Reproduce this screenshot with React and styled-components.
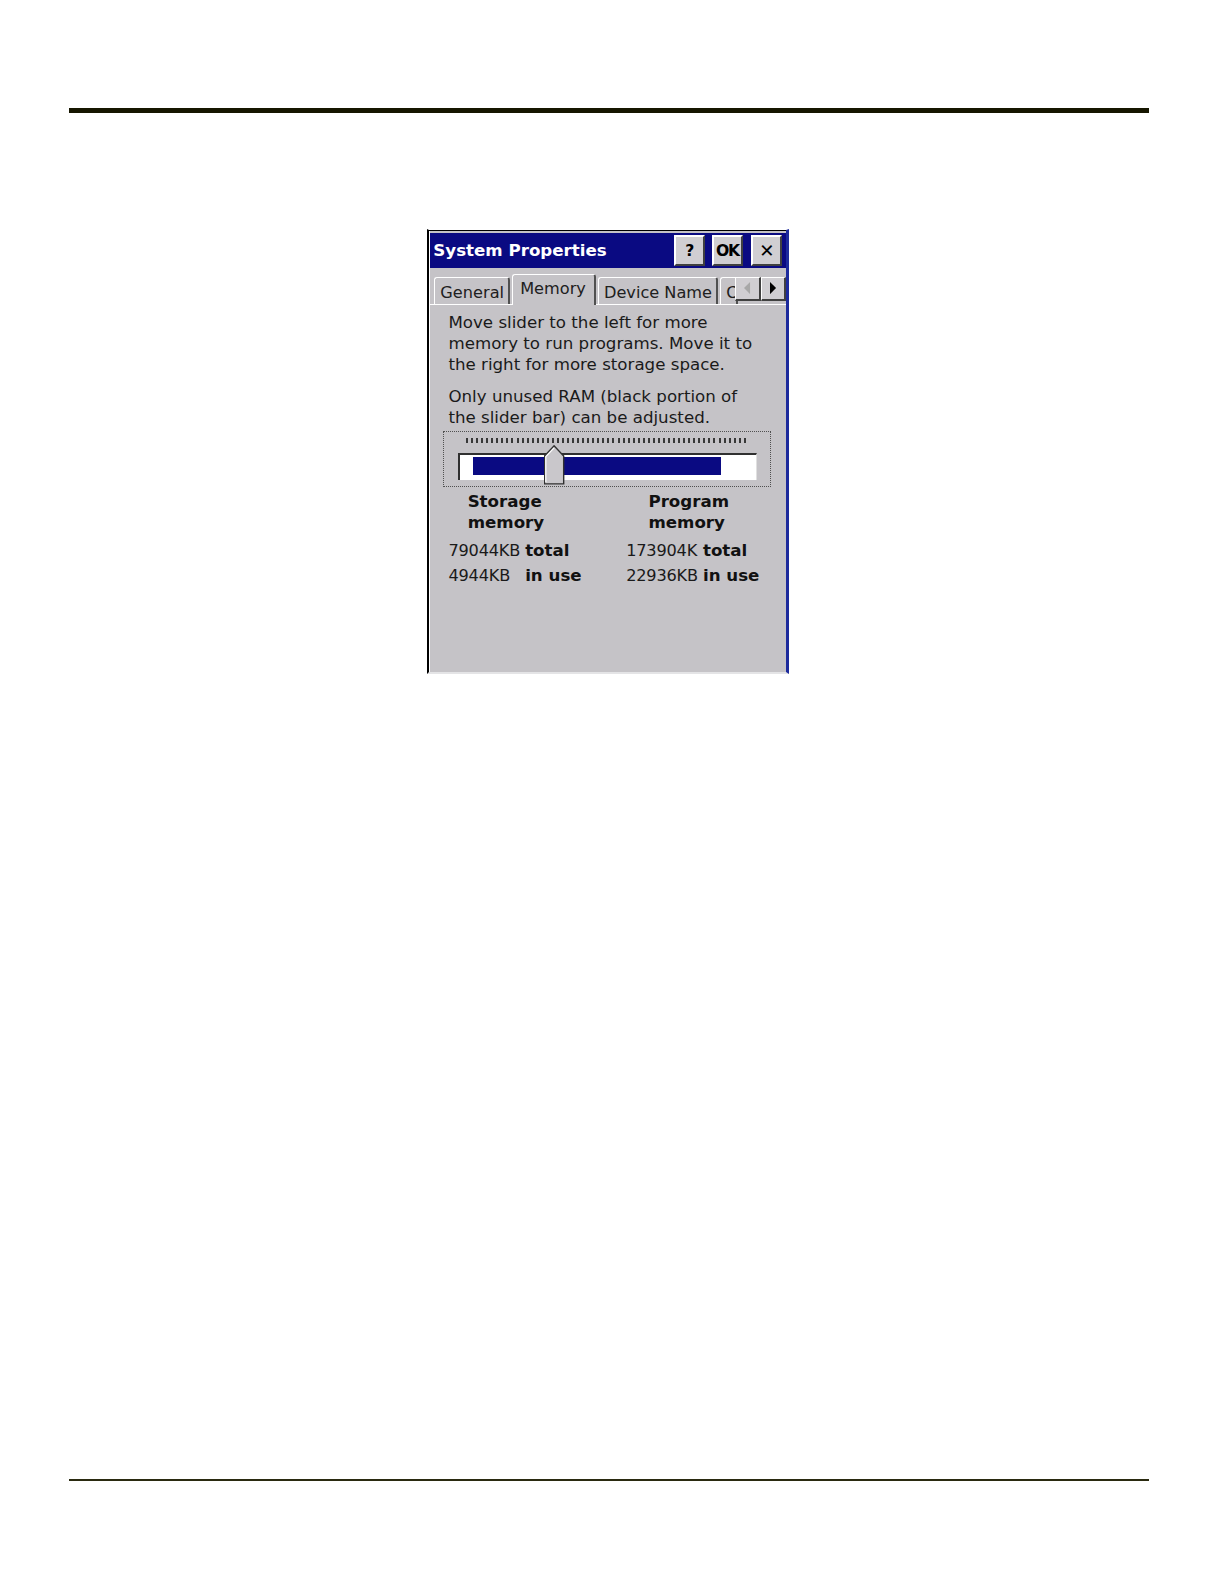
import styled, { createGlobalStyle } from "styled-components";

const GlobalStyle = createGlobalStyle`
  html, body {
    margin: 0;
    padding: 0;
    background: #ffffff;
  }
`;

const BLUE = "#0a0a82";
const GRAY = "#c5c3c7";
const FONT = `"DejaVu Sans", Verdana, sans-serif`;

export default function App() {
  return (
    <Page>
      <GlobalStyle />
      <TopRule />
      <Window>
        <TitleBar>
          <Title>System Properties</Title>
          <TitleButtons>
            <TitleButton>?</TitleButton>
            <TitleButton>OK</TitleButton>
            <TitleButton $thin>✕</TitleButton>
          </TitleButtons>
        </TitleBar>

        <TabRow>
          <Tab>General</Tab>
          <Tab $active>Memory</Tab>
          <Tab>Device Name</Tab>
          <Tab $clip>C</Tab>
          <ScrollArrows>
            <ArrowButton>
              <svg width="8" height="12" viewBox="0 0 8 12">
                <polygon points="7,0 1,6 7,12" fill="#a8a8a8" />
              </svg>
            </ArrowButton>
            <ArrowButton>
              <svg width="8" height="12" viewBox="0 0 8 12">
                <polygon points="1,0 7,6 1,12" fill="#000" />
              </svg>
            </ArrowButton>
          </ScrollArrows>
        </TabRow>

        <Panel>
          <Para>
            Move slider to the left for more
            <br />
            memory to run programs. Move it to
            <br />
            the right for more storage space.
          </Para>
          <Para>
            Only unused RAM (black portion of
            <br />
            the slider bar) can be adjusted.
          </Para>

          <SliderBox>
            <Ticks />
            <Track>
              <UsedBar />
              <Thumb>
                <svg width="20" height="39" viewBox="0 0 20 39">
                  <polygon
                    points="0.5,11 10,0.8 19.5,11 19.5,38.5 0.5,38.5"
                    fill="#c9c7cb"
                    stroke="#303030"
                    strokeWidth="1.4"
                  />
                  <polyline
                    points="1.8,37 1.8,11.5 10,2.8"
                    fill="none"
                    stroke="#ffffff"
                    strokeWidth="1.2"
                  />
                </svg>
              </Thumb>
            </Track>
          </SliderBox>

          <Columns>
            <Column>
              <Heading $indent={19}>
                Storage
                <br />
                memory
              </Heading>
              <Stats>
                <span>79044KB</span>
                <b>total</b>
                <span>4944KB</span>
                <b>in use</b>
              </Stats>
            </Column>
            <Column>
              <Heading $indent={22}>
                Program
                <br />
                memory
              </Heading>
              <Stats>
                <span>173904K</span>
                <b>total</b>
                <span>22936KB</span>
                <b>in use</b>
              </Stats>
            </Column>
          </Columns>
        </Panel>
      </Window>
      <BottomRule />
    </Page>
  );
}

const Page = styled.div`
  zoom: 1.0101;
  padding-top: 107px;
  padding-bottom: 60px;
  font-family: ${FONT};
`;

const TopRule = styled.div`
  margin-left: 68px;
  width: 1070px;
  height: 5px;
  background: #161600;
`;

const BottomRule = styled.div`
  margin-top: 797px;
  margin-left: 68px;
  width: 1070px;
  height: 2px;
  background: #2a2a10;
`;

const Window = styled.div`
  margin-top: 115px;
  margin-left: 423px;
  width: 358px;
  height: 440px;
  box-sizing: border-box;
  border-top: 1px solid #ffffff;
  border-left: 2px solid #000000;
  border-right: 3px solid #1c2a9c;
  border-bottom: 2px solid #e4e4e6;
  background: ${GRAY};
  box-shadow: inset 0 1px 0 #000, inset 1px 0 0 #ffffff;
  display: flex;
  flex-direction: column;
  padding: 3px 0 0 1px;
`;

const TitleBar = styled.div`
  height: 34px;
  background: ${BLUE};
  display: flex;
  align-items: center;
  justify-content: space-between;
  padding: 0 4px 0 3px;
`;

const Title = styled.div`
  color: #ffffff;
  font-weight: bold;
  font-size: 16.5px;
`;

const TitleButtons = styled.div`
  display: flex;
  gap: 7px;
`;

const TitleButton = styled.div`
  width: 31px;
  height: 30px;
  box-sizing: border-box;
  background: #d0ced2;
  border-top: 2px solid #ffffff;
  border-left: 2px solid #ffffff;
  border-right: 2px solid #404040;
  border-bottom: 2px solid #404040;
  display: flex;
  align-items: center;
  justify-content: center;
  font-weight: ${(p) => (p.$thin ? "normal" : "bold")};
  font-size: ${(p) => (p.$thin ? "18px" : "15.5px")};
  color: #000;
  letter-spacing: -1.5px;
  padding-right: ${(p) => (p.$thin ? "0" : "1px")};
`;

const TabRow = styled.div`
  display: flex;
  align-items: flex-end;
  height: 36px;
  padding-left: 4px;
  border-bottom: 1px solid #ffffff;
  position: relative;
`;

const Tab = styled.div`
  height: ${(p) => (p.$active ? "31px" : "27px")};
  box-sizing: border-box;
  padding: ${(p) => (p.$active ? "4px 8px 0 7px" : "5px 4px 0 5px")};
  margin-bottom: ${(p) => (p.$active ? "-1px" : "0")};
  margin-right: 2px;
  background: ${GRAY};
  border-top: 1px solid #ffffff;
  border-left: 1px solid #ffffff;
  border-right: 2px solid #505050;
  border-top-left-radius: 3px;
  border-top-right-radius: 3px;
  font-size: 16px;
  color: #202020;
  white-space: nowrap;
  overflow: hidden;
  width: ${(p) => (p.$clip ? "18px" : "auto")};
  z-index: ${(p) => (p.$active ? 1 : 0)};
`;

const ScrollArrows = styled.div`
  position: absolute;
  right: 0;
  top: 9px;
  display: flex;
  z-index: 2;
`;

const ArrowButton = styled.div`
  width: 25px;
  height: 24px;
  box-sizing: border-box;
  background: #d0ced2;
  border-top: 1px solid #ffffff;
  border-left: 1px solid #ffffff;
  border-right: 2px solid #404040;
  border-bottom: 2px solid #404040;
  display: flex;
  align-items: center;
  justify-content: center;
`;

const Panel = styled.div`
  flex: 1;
  padding: 7px 10px 0 18px;
  color: #1a1a1a;
`;

const Para = styled.p`
  margin: 0 0 10px 0;
  font-size: 16.5px;
  line-height: 21px;
`;

const SliderBox = styled.div`
  margin: -7px 0 0 -5px;
  width: 324px;
  height: 55px;
  box-sizing: border-box;
  border: 1px dotted #505050;
  padding: 6px 13px 0 13px;
`;

const Ticks = styled.div`
  margin-left: 8px;
  width: 280px;
  height: 5px;
  background: repeating-linear-gradient(
    to right,
    #383838 0,
    #383838 2px,
    transparent 2px,
    transparent 5px
  );
`;

const Track = styled.div`
  position: relative;
  margin-top: 10px;
  width: 296px;
  height: 26px;
  box-sizing: border-box;
  background: #ffffff;
  border-top: 2px solid #303030;
  border-left: 2px solid #303030;
  border-right: 1px solid #e0e0e0;
  padding: 2px 0 0 13px;
`;

const UsedBar = styled.div`
  width: 246px;
  height: 17px;
  background: ${BLUE};
`;

const Thumb = styled.div`
  position: absolute;
  left: 84px;
  top: -10px;
  line-height: 0;
`;

const Columns = styled.div`
  display: grid;
  grid-template-columns: 176px 1fr;
  margin-top: 4px;
`;

const Column = styled.div`
  display: flex;
  flex-direction: column;
`;

const Heading = styled.div`
  font-weight: bold;
  font-size: 16.5px;
  line-height: 21px;
  padding-left: ${(p) => p.$indent}px;
  color: #111;
`;

const Stats = styled.div`
  display: grid;
  grid-template-columns: auto 1fr;
  row-gap: 3px;
  margin-top: 7px;
  font-size: 16px;
  line-height: 21px;
  color: #1a1a1a;
  letter-spacing: -0.2px;

  b {
    font-size: 16.5px;
    color: #111;
    padding-left: 5px;
    letter-spacing: 0;
  }
`;
